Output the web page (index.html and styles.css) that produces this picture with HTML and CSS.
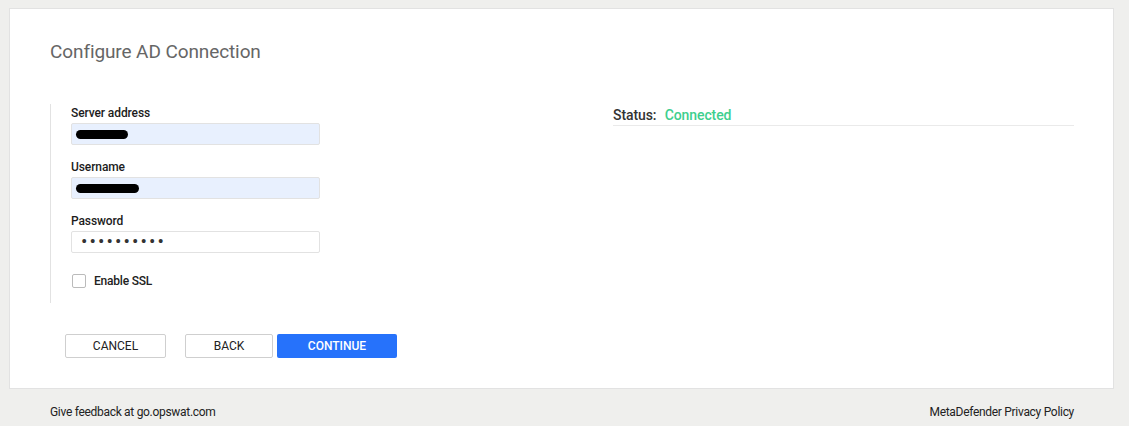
FILE: index.html
```html
<!DOCTYPE html>
<html lang="en">
<head>
    <meta charset="UTF-8">
    <meta name="viewport" content="width=device-width, initial-scale=1.0">
    <title>Configure AD Connection</title>
    <link rel="stylesheet" href="styles.css">
</head>
<body>

    <div class="card">
        <h1>Configure AD Connection</h1>

        <div class="layout">
            <!-- Connection form -->
            <div class="form">
                <label class="label">Server address</label>
                <div class="field filled"><span class="redact redact-server"></span></div>

                <label class="label">Username</label>
                <div class="field filled"><span class="redact redact-user"></span></div>

                <label class="label">Password</label>
                <div class="field password">&bull;&bull;&bull;&bull;&bull;&bull;&bull;&bull;&bull;&bull;</div>

                <div class="check">
                    <span class="box"></span>
                    <span>Enable SSL</span>
                </div>
            </div>

            <!-- Status -->
            <div class="status">
                <span class="status-label">Status:</span>
                <span class="status-value">Connected</span>
            </div>
        </div>

        <div class="actions">
            <button class="btn btn-cancel">CANCEL</button>
            <button class="btn btn-back">BACK</button>
            <button class="btn btn-primary">CONTINUE</button>
        </div>
    </div>

    <div class="footer">
        <span>Give feedback at go.opswat.com</span>
        <span>MetaDefender Privacy Policy</span>
    </div>

</body>
</html>
```

FILE: styles.css
```css
* {
    margin: 0;
    padding: 0;
    box-sizing: border-box;
    font-family: 'Roboto', 'Liberation Sans', sans-serif;
}

body {
    background-color: #efefed;
    color: #222;
    padding: 8px 15px 0 9px;
}

/* Main card */
.card {
    background: white;
    border: 1px solid #e2e2e2;
    padding: 31px 40px 30px 40px;
}

h1 {
    font-size: 19px;
    font-weight: 400;
    color: #666;
    line-height: 24px;
    letter-spacing: -0.1px;
    margin-bottom: 40px;
}

.layout {
    display: grid;
    grid-template-columns: 563px 1fr;
}

/* Form column */
.form {
    border-left: 1px solid #e2e2e2;
    padding: 2px 0 15px 20px;
}

.label {
    display: block;
    font-size: 12px;
    font-weight: 500;
    line-height: 14px;
    margin-bottom: 3px;
    color: #1c1c1c;
    letter-spacing: -0.1px;
}

.field {
    width: 249px;
    height: 22px;
    border: 1px solid #e2e2e2;
    border-radius: 2px;
    margin-bottom: 15px;
    display: flex;
    align-items: center;
    padding-left: 4px;
}

.filled {
    background: #e8f0fe;
}

.redact {
    display: block;
    height: 9px;
    background: #000;
    border-radius: 5px;
}

.redact-server {
    width: 52px;
}

.redact-user {
    width: 63px;
}

.password {
    font-size: 19px;
    line-height: 20px;
    letter-spacing: 2.1px;
    padding-left: 9px;
    color: #333;
    margin-bottom: 21px;
}

.check {
    display: flex;
    align-items: center;
    gap: 8px;
    font-size: 12px;
    font-weight: 500;
    padding-left: 1px;
    letter-spacing: -0.2px;
}

.box {
    width: 14px;
    height: 14px;
    border: 1px solid #bbb;
    border-radius: 2px;
}

/* Status column */
.status {
    align-self: start;
    border-bottom: 1px solid #eaeaea;
    font-size: 14px;
    font-weight: 500;
    line-height: 16px;
    letter-spacing: -0.1px;
    padding: 3px 0 2px 0;
    margin-right: -1px;
}

.status-label {
    color: #333;
    margin-right: 5px;
}

.status-value {
    color: #3ecf8e;
}

/* Buttons */
.actions {
    display: flex;
    margin-top: 31px;
    padding-left: 15px;
}

.btn {
    height: 24px;
    font-size: 12px;
    font-weight: 400;
    border-radius: 2px;
    cursor: pointer;
}

.btn-cancel,
.btn-back {
    background: white;
    border: 1px solid #cfcfcf;
    color: #222;
}

.btn-cancel {
    width: 101px;
    margin-right: 19px;
}

.btn-back {
    width: 88px;
    margin-right: 4px;
}

.btn-primary {
    width: 120px;
    background: #2672fb;
    border: none;
    color: white;
    font-weight: 500;
}

/* Footer */
.footer {
    display: flex;
    justify-content: space-between;
    font-size: 12px;
    letter-spacing: -0.3px;
    color: #222;
    padding: 16px 40px 0 41px;
}
```
